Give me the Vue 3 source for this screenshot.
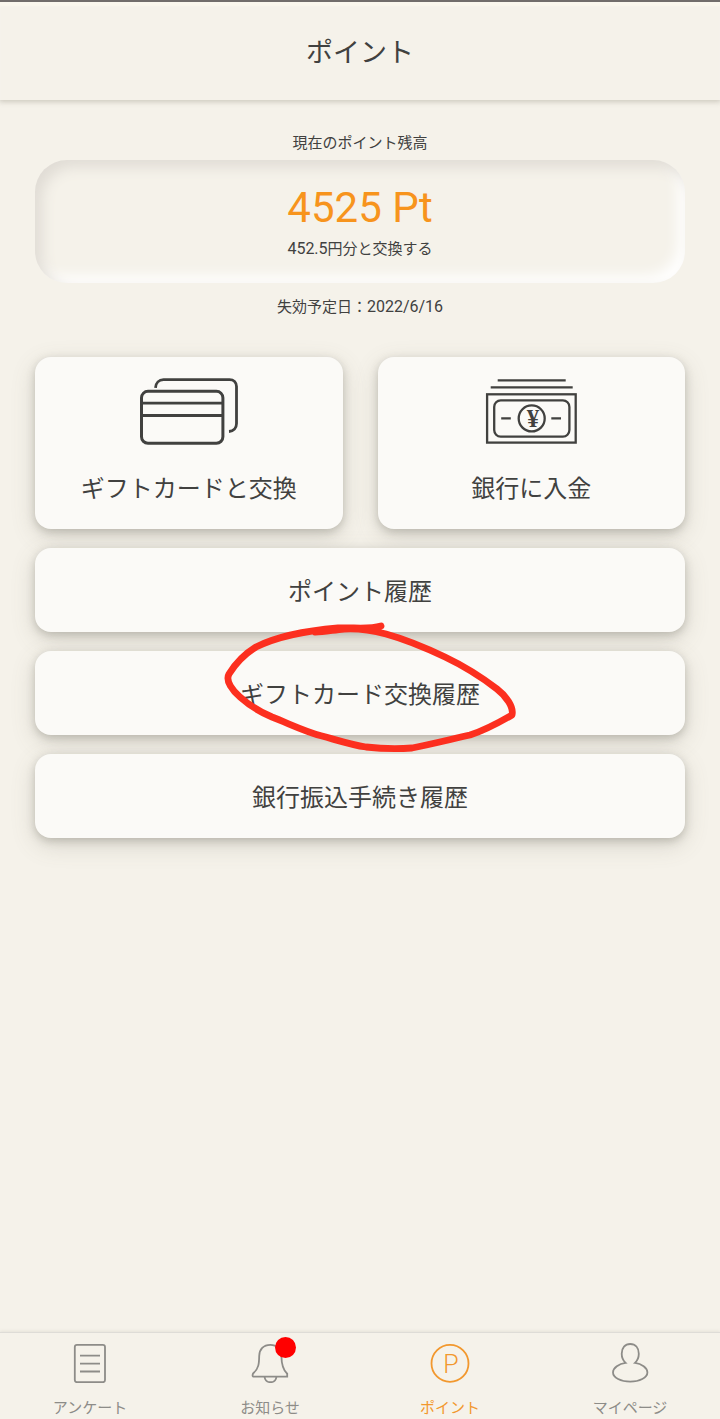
<script setup>
const histories = [
  { label: 'ポイント履歴', marked: false },
  { label: 'ギフトカード交換履歴', marked: true },
  { label: '銀行振込手続き履歴', marked: false },
]
</script>

<template>
  <div class="screen" lang="ja">
    <header class="header">
      <h1>ポイント</h1>
    </header>

    <main class="main">
      <section class="balance">
        <p class="note">現在のポイント残高</p>
        <div class="well">
          <p class="points">4525 Pt</p>
          <p class="note"><span class="num">452.5</span>円分と交換する</p>
        </div>
        <p class="note">失効予定日：<span class="num">2022/6/16</span></p>
      </section>

      <div class="cards">
        <button type="button" class="card">
          <svg width="98" height="67" viewBox="140 378 98 67" fill="none" stroke="currentColor" stroke-width="3" aria-hidden="true">
            <path d="M155.5 387.8C155.8 383 159 379.6 163.5 379.6H229.5C233.6 379.6 236.5 382.6 236.5 386.6V423.5C236.5 428 233.6 431.2 229 431.5" stroke-width="2.8" />
            <rect x="141.5" y="391.3" width="81.4" height="52" rx="6.5" />
            <path d="M141.5 403.2H223M141.5 415.5H223" stroke-width="2.8" />
          </svg>
          <span>ギフトカードと交換</span>
        </button>
        <button type="button" class="card">
          <svg width="94" height="67" viewBox="485 378 94 67" fill="none" stroke="currentColor" stroke-width="2.3" aria-hidden="true">
            <path d="M498.7 380.3H566.7M491.7 387.3H573.7" />
            <rect x="488.1" y="394.3" width="88.6" height="48.3" />
            <rect x="495.2" y="400.4" width="75.2" height="36.2" rx="6.5" />
            <circle cx="532.7" cy="418.4" r="13" />
            <path d="M502.2 418.4H511.8M552.3 418.4H562" />
            <text x="534" y="427" class="yen" text-anchor="middle">¥</text>
          </svg>
          <span>銀行に入金</span>
        </button>
      </div>

      <div v-for="item in histories" :key="item.label" class="row-wrap">
        <button type="button" class="row">{{ item.label }}</button>
        <svg v-if="item.marked" class="scribble" width="304" height="138" viewBox="218 618 304 138" aria-hidden="true">
          <path d="M381 626C368 630 352 627 338 628C302 631 276 637 256 647C243 655 234 666 229 674C225 681 233 691 240 697C250 706 260 712 272 717C290 724 306 732 322 736C340 741 352 745 366 747C384 749 398 749 412 748C432 744 452 739 470 735C486 730 500 722 512 715C514 707 506 696 497 689C484 679 466 667 445 657C424 647 404 639 386 634C371 630 359 628 344 629C333 630 324 632 315 632" />
        </svg>
      </div>
    </main>

    <nav class="tabs">
      <a href="#survey" class="tab">
        <span class="icon">
          <svg width="40" height="40" viewBox="0 0 40 40" aria-hidden="true">
            <rect x="4.8" y="1.8" width="30.2" height="37.4" rx="2.2" />
            <path d="M10 12.7H30M10 20.6H30M10 28.5H30" />
          </svg>
        </span>
        <span>アンケート</span>
      </a>
      <a href="#news" class="tab">
        <span class="icon">
          <svg width="40" height="40" viewBox="0 0 40 40" aria-hidden="true">
            <path d="M20.3 1.8C13.5 1.8 9.3 6.5 9.2 13C9.1 20.5 8.7 25.5 3.5 30C2.3 31.2 2.3 33.6 3.3 33.6H37.2V30.7C33 27 31.5 21.5 31.4 13C31.3 6.5 27 1.8 20.3 1.8Z" />
            <path d="M14.6 34C15 37.4 17.2 39.2 20.5 39.2S26 37.4 26.4 34" />
          </svg>
          <span class="badge"></span>
        </span>
        <span>お知らせ</span>
      </a>
      <a href="#points" class="tab active" aria-current="page">
        <span class="icon">
          <svg width="40" height="40" viewBox="0 0 40 40" aria-hidden="true">
            <circle cx="20" cy="20.4" r="18.5" />
            <text x="21" y="30" class="pee" text-anchor="middle">P</text>
          </svg>
        </span>
        <span>ポイント</span>
      </a>
      <a href="#mypage" class="tab">
        <span class="icon">
          <svg width="40" height="40" viewBox="0 0 40 40" aria-hidden="true">
            <path d="M15.6 19.8C13 17.4 11.7 14.5 11.7 10.7C11.7 4.8 15 1 20.2 1S28.8 4.8 28.8 10.7C28.8 14.5 27.6 17.4 25 19.8C31.5 20.6 37.4 25 37.4 29.4C37.4 34.6 29.5 38.6 20.2 38.6S3 34.6 3 29.4C3 25 9 20.6 15.6 19.8Z" />
          </svg>
        </span>
        <span>マイページ</span>
      </a>
    </nav>
  </div>
</template>

<style>
body {
  background: #f5f2ea;
}
</style>

<style scoped>
.screen {
  min-height: 100vh;
  display: flex;
  flex-direction: column;
  box-sizing: border-box;
  background: #f5f2ea;
  color: #41413f;
  font-family: Roboto, "Noto Sans CJK JP", sans-serif;
}
.header {
  height: 100px;
  box-sizing: border-box;
  padding-top: 4px;
  border-top: 2px solid #716d6b;
  display: flex;
  align-items: center;
  justify-content: center;
  box-shadow: inset 0 5px 2px -1px #faf7ee, 0 1px 5px 1px rgba(120, 112, 95, 0.3);
}
h1 {
  margin: 0;
  font-size: 27px;
  font-weight: 400;
  line-height: 40px;
}
p {
  margin: 0;
}
.main {
  flex: 1;
  padding: 33px 35px;
  display: flex;
  flex-direction: column;
  gap: 19px;
}
.balance {
  text-align: center;
  margin-bottom: 21px;
}
.note {
  font-size: 15px;
  line-height: 20px;
}
.num {
  font-size: 16px;
}
.well {
  margin: 7px 0 14px;
  padding: 24px 0;
  border-radius: 32px;
  box-shadow: inset 7px 7px 14px #e0dcd5, inset -7px -7px 14px #ffffff;
}
.points {
  font-size: 42px;
  line-height: 48px;
  margin-bottom: 7px;
  color: #f7941d;
}
.cards {
  display: grid;
  grid-template-columns: 1fr 1fr;
  gap: 35px;
}
.card,
.row {
  width: 100%;
  border: 0;
  border-radius: 16px;
  background: #fbfaf7;
  box-shadow: 0 7px 24px rgba(100, 95, 80, 0.2), 0 3px 8px rgba(90, 88, 78, 0.28);
  color: inherit;
  font: inherit;
  font-size: 24px;
  line-height: 32px;
}
.card {
  padding: 21px 0 24px;
  display: flex;
  flex-direction: column;
  align-items: center;
  gap: 28px;
}
.row {
  display: block;
  padding: 28px 0 24px;
}
.row-wrap {
  position: relative;
}
.scribble {
  position: absolute;
  z-index: 1;
  top: -33px;
  left: calc(50% - 142px);
  pointer-events: none;
  fill: none;
  stroke: #fc2f1f;
  stroke-width: 6.8;
  stroke-linecap: round;
  stroke-linejoin: round;
}
.yen {
  font-family: "Liberation Serif", serif;
  font-size: 25px;
  font-weight: 700;
  fill: currentColor;
  stroke: none;
}
.tabs {
  display: grid;
  grid-template-columns: repeat(4, 1fr);
  border-top: 1px solid #dedcd7;
  box-shadow: 0 -1px 3px rgba(120, 112, 95, 0.12);
}
.tab {
  display: flex;
  flex-direction: column;
  align-items: center;
  gap: 15px;
  padding: 10px 0 1px;
  font-size: 15px;
  line-height: 20px;
  color: #8d8c88;
  text-decoration: none;
}
.active {
  color: #f2982e;
}
.icon {
  position: relative;
  height: 40px;
}
.icon svg {
  display: block;
  fill: none;
  stroke: currentColor;
  stroke-width: 1.8;
}
.icon .pee {
  font-family: Roboto, sans-serif;
  font-size: 25px;
  font-weight: 300;
  fill: currentColor;
  stroke: none;
}
.badge {
  position: absolute;
  top: -6px;
  left: 25px;
  width: 21px;
  height: 21px;
  border-radius: 50%;
  background: #ff0000;
}
</style>
